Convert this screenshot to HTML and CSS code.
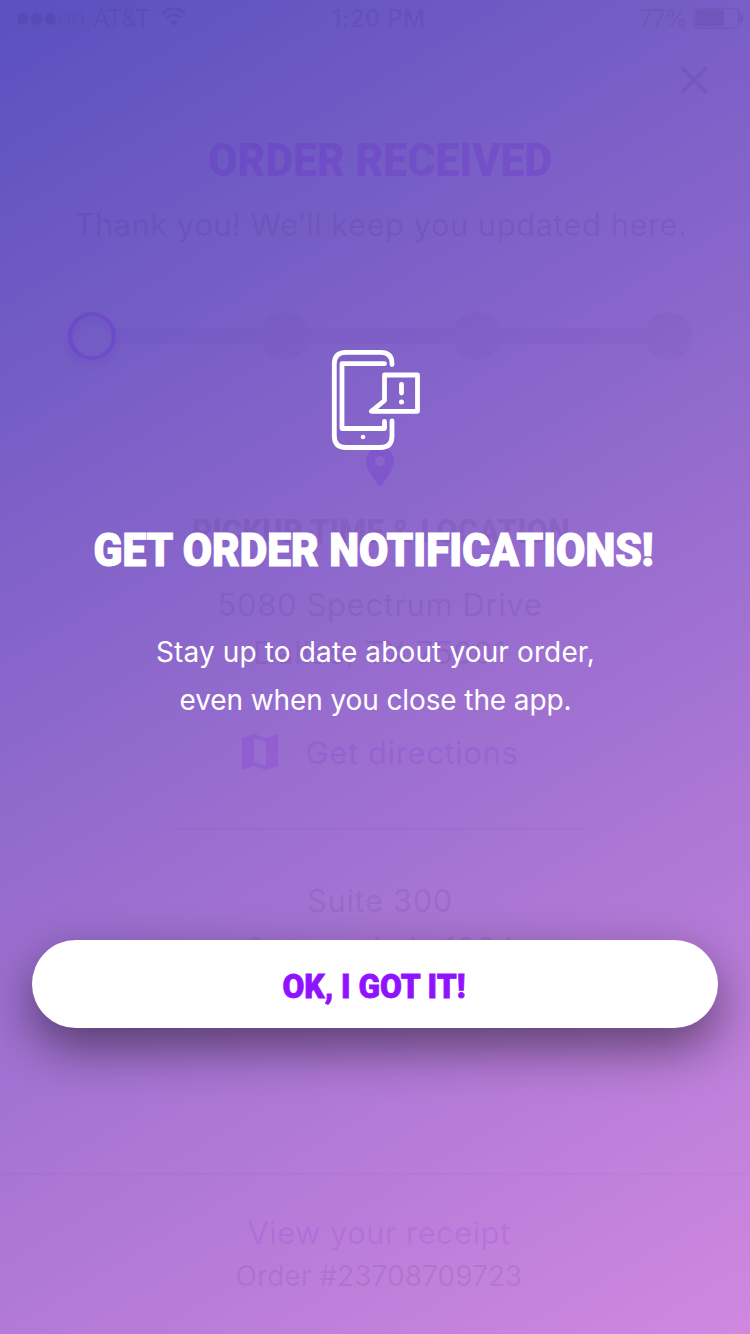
FILE: index.html
```
<!DOCTYPE html>
<html lang="en">
<head>
<meta charset="utf-8">
<meta name="viewport" content="width=750">
<title>Order notifications</title>
<link rel="stylesheet" href="styles.css">
</head>
<body>
<div class="screen">
  <div class="order">
    <header class="status">
      <div class="carrier">
        <span class="signal"><i class="on"></i><i class="on"></i><i class="on"></i><i></i><i></i></span>
        <span class="network">AT&amp;T</span>
        <svg class="wifi" width="24" height="20" viewBox="0 0 24 20"><g fill="none" stroke="currentColor" stroke-width="3"><path d="M1 6.300Q12-2.800 23 6.300"/><path d="M4.800 10.800Q12 4.600 19.200 10.800"/></g><path d="M8 14.800Q12 11.400 16 14.800L12 19.500Z" fill="currentColor"/></svg>
      </div>
      <span class="clock">1:20 PM</span>
      <div class="power">
        <span>77%</span>
        <svg width="49" height="21" viewBox="0 0 49 21"><rect x=".75" y=".75" width="44" height="19.500" rx="3" fill="none" stroke="currentColor" stroke-width="1.200"/><rect x="2" y="2.200" width="28" height="16" rx="1" fill="currentColor"/><path d="M46 6.500h1.500q1.500 0 1.500 2v4q0 2-1.500 2H46z" fill="currentColor"/></svg>
      </div>
    </header>
    <svg class="close" width="28" height="28" viewBox="0 0 28 28"><path d="M1.500 1.500l25 25M26.500 1.500l-25 25" stroke="currentColor" stroke-width="3.500"/></svg>
    <svg class="title accent" width="750" height="50"><text x="208" y="41" textLength="344" lengthAdjust="spacingAndGlyphs">ORDER RECEIVED</text></svg>
    <p class="line thanks">Thank you! We’ll keep you updated here.</p>
    <svg class="progress" width="630" height="56" viewBox="0 0 630 56"><g class="track"><path d="M49.500 17H602V33H49.500A24 24 0 0 0 49.500 17Z"/><circle cx="218" cy="25" r="24"/><circle cx="410" cy="25" r="24"/><circle cx="602" cy="25" r="24"/></g><circle class="current" cx="26" cy="25" r="22"/></svg>
    <svg class="pin accent" width="28" height="40" viewBox="0 0 28 40"><path fill="currentColor" fill-rule="evenodd" d="M14 0A14 14 0 0 0 0 14C0 24.500 14 40 14 40S28 24.500 28 14A14 14 0 0 0 14 0ZM14 9A5 5 0 1 1 14 19A5 5 0 0 1 14 9Z"/></svg>
    <svg class="subtitle" width="750" height="40"><text x="192" y="31" textLength="378" lengthAdjust="spacingAndGlyphs">PICKUP TIME &amp; LOCATION</text></svg>
    <address class="line address">5080 Spectrum Drive<br>Dallas, TX 75001</address>
    <div class="directions accent">
      <svg width="36" height="36" viewBox="0 0 36 36"><path fill="currentColor" fill-rule="evenodd" d="M0 4L12 0L24 4L36 0V32L24 36L12 32L0 36ZM12 4V28L24 32V8Z"/></svg>
      <span class="line">Get directions</span>
    </div>
    <hr class="rule">
    <p class="line suite">Suite 300<br>Gate code is 1234</p>
    <footer class="receipt">
      <p class="line accent view">View your receipt</p>
      <p class="number">Order #23708709723</p>
    </footer>
  </div>
  <section class="modal">
    <svg class="phone" width="92" height="104" viewBox="330 348 92 104"><g fill="none" stroke="#fff" stroke-width="4.800" stroke-linecap="round" stroke-linejoin="round"><path d="M392 364.500V363.500Q392 352.300 380.500 352.300H346Q334.300 352.300 334.300 364V436Q334.300 447.500 346 447.500H380.500Q392 447.500 392 436V421"/><path d="M384.500 363.700H342V428.500H384.500V421.500"/><path d="M384.500 375H417.500V411.300H371.300L384.500 400.500Z"/><path d="M401.500 384.300V393"/></g><circle cx="401.500" cy="402" r="2.500" fill="#fff"/><circle cx="363" cy="437" r="2.300" fill="#fff"/></svg>
    <svg class="headline" width="750" height="50"><text x="93.500" y="40" textLength="560" lengthAdjust="spacingAndGlyphs">GET ORDER NOTIFICATIONS!</text></svg>
    <p class="message">Stay up to date about your order,<br><span class="detail">even when you close the app.</span></p>
    <button class="confirm"><svg width="200" height="40"><text x="7.500" y="33.500" textLength="183" lengthAdjust="spacingAndGlyphs">OK, I GOT IT!</text></svg></button>
  </section>
</div>
</body>
</html>
```
FILE: styles.css
```
* { box-sizing: border-box; }
body { margin: 0; font-family: Inter, "Liberation Sans", sans-serif; }
p, hr, address { margin: 0; font-style: normal; }
svg { display: block; flex: none; overflow: visible; }
.screen {
  position: relative;
  width: 750px;
  height: 1334px;
  overflow: hidden;
  background: linear-gradient(149deg, #5a50bf 0%, #966cce 50%, #d088e0 100%);
}
.order {
  display: flex;
  flex-direction: column;
  align-items: center;
  height: 100%;
  color: rgba(50, 20, 90, .1);
}
.accent { color: rgba(96, 20, 205, .19); }
.status {
  display: grid;
  grid-template-columns: 1fr auto 1fr;
  align-items: center;
  width: 100%;
  height: 38px;
  padding: 0 7px 0 17px;
  font-size: 24px;
  line-height: 38px;
}
.carrier, .power { display: flex; align-items: center; }
.signal { display: flex; gap: 3px; }
.signal i { width: 11px; height: 12px; border: 1px solid currentColor; border-radius: 50%; }
.signal .on { background: currentColor; border: 0; }
.network { margin-left: 9px; letter-spacing: -.4px; }
.wifi { margin-left: 12px; margin-top: -4px; }
.clock { margin-left: -3px; font-weight: 500; letter-spacing: .3px; }
.power { justify-content: flex-end; gap: 7px; letter-spacing: -1.200px; }
.power svg { margin-top: -2px; }
.close { align-self: flex-end; margin: 28px 42px 0 0; }
svg text { font-family: Roboto, "Liberation Sans", sans-serif; font-weight: 900; fill: currentColor; }
.title { margin-top: 41px; }
.title text { font-size: 46.500px; }
.line { font-size: 31px; line-height: 48px; letter-spacing: .6px; text-align: center; }
.thanks { margin: 16px 0 0 12px; letter-spacing: .44px; }
.progress { width: 630px; margin: 62px 0 0 12px; }
.track { fill: #3c1482; opacity: .035; }
.current { fill: none; stroke: rgba(98, 44, 210, .32); stroke-width: 4; filter: drop-shadow(0 5px 3px rgba(50, 10, 140, .3)); }
.pin { margin: 80px 0 0 10px; }
.subtitle { margin-top: 25px; }
.subtitle text { font-size: 34px; }
.address { margin: 29px 0 0 10px; }
.directions { display: flex; align-items: center; gap: 28px; margin: 51px 0 0 10px; color: rgba(125, 30, 220, .17); }
.directions .line { padding-top: 1px; margin-bottom: -1px; }
.rule { width: 406px; height: 2px; margin: 52px 0 0 8px; border: 0; background: rgba(60, 20, 120, .04); }
.suite { margin: 47px 0 0 10px; }
.receipt {
  width: 100%;
  margin-top: 200px;
  padding: 35px 0 0 10px;
  border-top: 2px solid rgba(60, 20, 120, .02);
  text-align: center;
}
.view { margin: -1px 0 0 -2px; letter-spacing: .4px; color: rgba(150, 40, 220, .16); }
.number { font-size: 28px; line-height: 38px; letter-spacing: .05px; margin-left: -2px; }
.modal {
  position: absolute;
  inset: 0;
  display: flex;
  flex-direction: column;
  align-items: center;
  padding-top: 348px;
  color: #fff;
}
.phone { margin-left: 2px; }
.headline { margin-top: 74px; }
.headline text { font-size: 46.500px; stroke: currentColor; stroke-width: 1.200px; }
.message { margin-top: 52px; padding-left: 1px; font-size: 28px; line-height: 48px; letter-spacing: .13px; text-align: center; }
.detail { letter-spacing: -.1px; }
.confirm {
  display: flex;
  align-items: center;
  justify-content: center;
  width: 686px;
  height: 88px;
  margin-top: 216px;
  padding: 0;
  border: 0;
  border-radius: 44px;
  background: #fff;
  color: #9013fe;
  box-shadow: 0 20px 50px rgba(0, 0, 0, .48);
}
.confirm text { font-size: 34px; stroke: currentColor; stroke-width: .800px; }
```
